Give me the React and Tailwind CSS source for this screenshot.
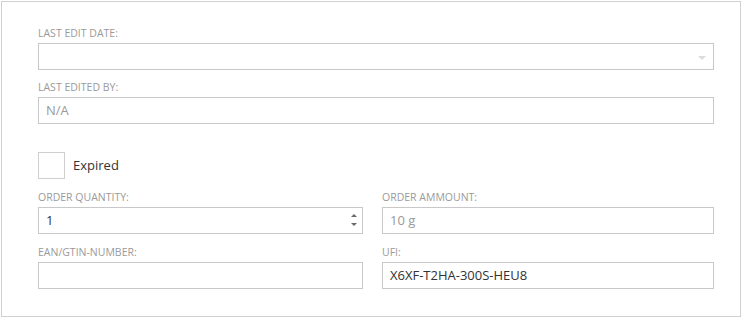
import React from 'react'

const font = { fontFamily: '"Open Sans", "Noto Sans", sans-serif' }

function Label({ children, className = '' }) {
  return (
    <div className={`h-[14px] leading-[14px] text-[10.5px] text-[#9a9a9a] uppercase ${className}`}>
      {children}
    </div>
  )
}

function Input({ value, muted, className = '', children }) {
  return (
    <div className={`relative h-[27px] border border-[#c8c8c8] bg-white flex items-center pl-[7px] text-[13px] ${muted ? 'text-[#9a9a9a]' : 'text-[#333]'} ${className}`}>
      {value}
      {children}
    </div>
  )
}

export default function App() {
  return (
    <div className='w-[742px] h-[318px] bg-white p-px' style={font}>
      <div className='w-[740px] h-[316px] border border-[#d0d0d0] pt-[24px] pl-[36px]'>
        <div className='w-[676px]'>
          <Label className='mb-[3px]'>Last edit date:</Label>
          <Input>
            <svg className='absolute right-[7px] top-[12px]' width='8' height='4' viewBox='0 0 8 4'>
              <path d='M0 0 L8 0 L4 4 Z' fill='#dcdcdc' />
            </svg>
          </Input>

          <Label className='mt-[10px] mb-[3px]'>Last edited by:</Label>
          <Input value='N/A' muted />

          <div className='mt-[28px] flex items-center'>
            <div className='w-[27px] h-[27px] border border-[#cfcfcf]' />
            <span className='ml-[8px] text-[13px] text-[#333]'>Expired</span>
          </div>

          <div className='mt-[11px] flex gap-[19px]'>
            <div className='w-[325px]'>
              <Label className='mb-[3px]'>Order quantity:</Label>
              <Input value='1'>
                <div className='absolute right-[5px] top-[6px] flex flex-col items-center gap-[6px]'>
                  <svg width='6' height='3' viewBox='0 0 6 3'>
                    <path d='M3 0 L6 3 L0 3 Z' fill='#6a6a6a' />
                  </svg>
                  <svg width='6' height='3' viewBox='0 0 6 3'>
                    <path d='M0 0 L6 0 L3 3 Z' fill='#6a6a6a' />
                  </svg>
                </div>
              </Input>
              <Label className='mt-[11px] mb-[3px]'>EAN/GTIN-number:</Label>
              <Input />
            </div>
            <div className='w-[332px]'>
              <Label className='mb-[3px]'>Order ammount:</Label>
              <Input value='10 g' muted />
              <Label className='mt-[11px] mb-[3px]'>UFI:</Label>
              <Input value='X6XF-T2HA-300S-HEU8' />
            </div>
          </div>
        </div>
      </div>
    </div>
  )
}
